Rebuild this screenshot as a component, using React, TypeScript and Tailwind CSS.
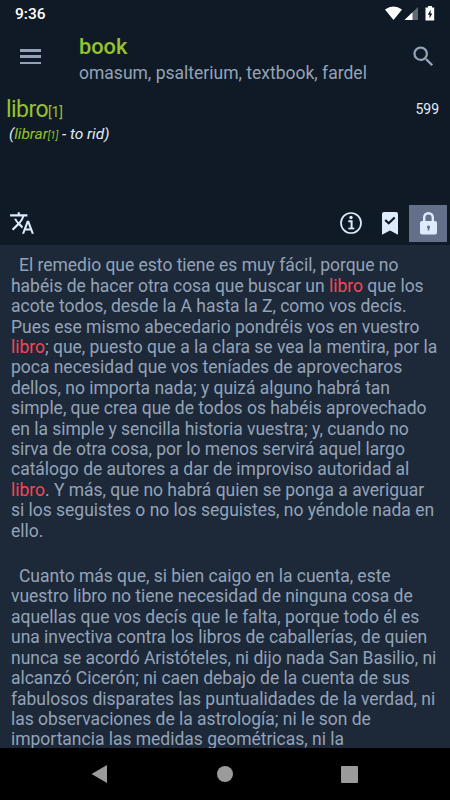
import React from 'react';

const FIRST_PARAGRAPH = [
  'El remedio que esto tiene es muy fácil, porque no',
  'habéis de hacer otra cosa que buscar un *libro* que los',
  'acote todos, desde la A hasta la Z, como vos decís.',
  'Pues ese mismo abecedario pondréis vos en vuestro',
  '*libro*; que, puesto que a la clara se vea la mentira, por la',
  'poca necesidad que vos teníades de aprovecharos',
  'dellos, no importa nada; y quizá alguno habrá tan',
  'simple, que crea que de todos os habéis aprovechado',
  'en la simple y sencilla historia vuestra; y, cuando no',
  'sirva de otra cosa, por lo menos servirá aquel largo',
  'catálogo de autores a dar de improviso autoridad al',
  '*libro*. Y más, que no habrá quien se ponga a averiguar',
  'si los seguistes o no los seguistes, no yéndole nada en',
  'ello.',
];

const SECOND_PARAGRAPH = [
  'Cuanto más que, si bien caigo en la cuenta, este',
  'vuestro libro no tiene necesidad de ninguna cosa de',
  'aquellas que vos decís que le falta, porque todo él es',
  'una invectiva contra los libros de caballerías, de quien',
  'nunca se acordó Aristóteles, ni dijo nada San Basilio, ni',
  'alcanzó Cicerón; ni caen debajo de la cuenta de sus',
  'fabulosos disparates las puntualidades de la verdad, ni',
  'las observaciones de la astrología; ni le son de',
  'importancia las medidas geométricas, ni la',
];

// Words wrapped in asterisks are search hits
const Line: React.FC<{ text: string }> = ({ text }) => (
  <span className="block whitespace-nowrap">
    {text.split('*').map((part, i) =>
      i % 2 === 1 ? (
        <span key={i} className="text-[#fb4453]">
          {part}
        </span>
      ) : (
        part
      )
    )}
  </span>
);

const Paragraph: React.FC<{ lines: string[] }> = ({ lines }) => (
  <p className="[&>span:first-child]:pl-2">
    {lines.map((line) => (
      <Line key={line} text={line} />
    ))}
  </p>
);

const StatusBar: React.FC = () => (
  <div className="flex h-7 shrink-0 items-center justify-between pl-[15px] pr-[15px] text-white">
    <span className="text-[15.5px] font-medium leading-7">9:36</span>
    <svg className="mt-[-2px] h-[15px] w-[50px]" viewBox="0 0 50 15" fill="currentColor">
      <path d="M0 3.4Q8.5-2.4 17 3.4L8.5 14Z" />
      <path d="M33 1v13H19.5Z" opacity=".35" />
      <path d="M27.5 6.3V14h-8Z" />
      <path
        fillRule="evenodd"
        d="M43 0h4v1.5h2.2v13h-8.7v-13H43ZM45.6 3.8L42.8 8.7h1.7v3.8l2.8-5h-1.7Z"
      />
    </svg>
  </div>
);

const Toolbar: React.FC = () => (
  <header className="flex h-[62px] shrink-0 items-start text-[#94a3b8]">
    <button className="ml-5 mt-[21px] flex h-[15px] w-[21px] flex-col justify-between">
      <span className="h-[2.5px] w-full bg-current" />
      <span className="h-[2.5px] w-full bg-current" />
      <span className="h-[2.5px] w-full bg-current" />
    </button>
    <div className="ml-[38px] flex-1 whitespace-nowrap">
      <h1 className="mt-[6px] text-[21.8px] font-medium leading-[26px] text-[#96c22b]">book</h1>
      <p className="mt-[2px] text-[17.5px] leading-[22px]">omasum, psalterium, textbook, fardel</p>
    </div>
    <svg className="mr-[13px] mt-[15px] h-[27px] w-[27px]" viewBox="0 0 24 24" fill="currentColor">
      <path d="M15.5 14h-.79l-.28-.27A6.471 6.471 0 0 0 16 9.5 6.5 6.5 0 1 0 9.5 16c1.61 0 3.09-.59 4.23-1.57l.27.28v.79l5 4.99L20.49 19l-4.99-5zm-6 0C7.01 14 5 11.99 5 9.5S7.01 5 9.5 5 14 7.01 14 9.5 11.99 14 9.5 14z" />
    </svg>
  </header>
);

const Entry: React.FC = () => (
  <section className="h-[114px] shrink-0 pt-[5px]">
    <div className="flex items-start justify-between pl-[6px] pr-[11px]">
      <h2 className="text-[23px] leading-[30px] tracking-[-0.55px] text-[#96c22b]">
        libro<span className="text-[14px] tracking-[-0.2px]">[1]</span>
      </h2>
      <span className="text-[14px] leading-[28px] text-[#e2ecfa]">599</span>
    </div>
    <p className="-mt-[3px] pl-[9px] text-[15.5px] italic leading-[21px] tracking-[-0.03px] text-[#e2ecfa]">
      (<span className="text-[#96c22b]">librar<span className="text-[10px]">[1]</span></span> - to rid)
    </p>
  </section>
);

const Actions: React.FC = () => (
  <div className="flex h-[41px] shrink-0 items-start text-[#deebfd]">
    <svg className="ml-[9px] mt-[6px] h-[26px] w-[26px]" viewBox="0 0 24 24" fill="currentColor">
      <path d="M12.87 15.07l-2.54-2.51.03-.03A17.52 17.52 0 0 0 14.07 6H17V4h-7V2H8v2H1v1.99h11.17C11.5 7.92 10.44 9.75 9 11.35 8.07 10.32 7.3 9.19 6.69 8h-2c.73 1.63 1.73 3.17 2.98 4.56l-5.09 5.02L4 19l5-5 3.11 3.11.76-2.04zM18.5 10h-2L12 22h2l1.12-3h4.75L21 22h2l-4.5-12zm-2.62 7l1.62-4.33L19.12 17h-3.24z" />
    </svg>
    <div className="flex-1" />
    <svg className="mt-2 h-[22px] w-[22px]" viewBox="0 0 22 22" fill="none" stroke="currentColor">
      <circle cx="11" cy="11" r="10" strokeWidth="1.7" />
      <circle cx="11" cy="5.5" r="1.7" fill="currentColor" stroke="none" />
      <path d="M8.3 9.3h3.3v7.5" strokeWidth="2" />
      <path d="M8.3 16.5h6" strokeWidth="1.7" />
    </svg>
    <svg className="ml-5 mt-2 h-[23px] w-4" viewBox="0 0 16 23" fill="currentColor">
      <path d="M0 2a2 2 0 0 1 2-2h12a2 2 0 0 1 2 2v20.7l-8-4.2-8 4.2Z" />
      <path d="M3.2 8l3.5 3.3 6-5.8" fill="none" stroke="#0f1a26" strokeWidth="2.2" />
    </svg>
    <button className="ml-[11px] mr-[3px] mt-[0.5px] flex h-[37.5px] w-[38px] items-center justify-center bg-[#64708a]">
      <svg className="h-[23px] w-[17px]" viewBox="0 0 17 23" fill="currentColor">
        <path d="M4.2 10V5.5a4.3 4.3 0 0 1 8.6 0V10" fill="none" stroke="currentColor" strokeWidth="2.4" />
        <rect y="9" width="17" height="13.5" rx="2" />
        <path d="M8.5 13.6a1.5 1.5 0 0 1 .8 2.8V18.5H7.7v-2.1A1.5 1.5 0 0 1 8.5 13.6Z" fill="#64708a" />
      </svg>
    </button>
  </div>
);

const NavigationBar: React.FC = () => (
  <nav className="flex h-[52px] shrink-0 items-center justify-between bg-black pl-[91px] pr-[92px] text-[#9b9b9b]">
    <svg className="h-[18px] w-4" viewBox="0 0 16 18" fill="currentColor">
      <path d="M16 0v18L.5 9Z" />
    </svg>
    <span className="ml-px h-4 w-4 rounded-full bg-current" />
    <span className="h-[17px] w-[17px] rounded-[1px] bg-current" />
  </nav>
);

const App: React.FC = () => (
  <div className="flex h-[800px] w-[450px] flex-col overflow-hidden bg-[#0f1a26] font-[Roboto,sans-serif]">
    <StatusBar />
    <Toolbar />
    <Entry />
    <Actions />
    <main className="min-h-0 flex-1 overflow-hidden bg-[#1d2938] pl-[11px] pt-[10.4px] text-[17.5px] leading-[20.4px] tracking-[-0.02px] text-[#94a3b8]">
      <Paragraph lines={FIRST_PARAGRAPH} />
      <div className="h-[25px]" />
      <Paragraph lines={SECOND_PARAGRAPH} />
    </main>
    <NavigationBar />
  </div>
);

export default App;
